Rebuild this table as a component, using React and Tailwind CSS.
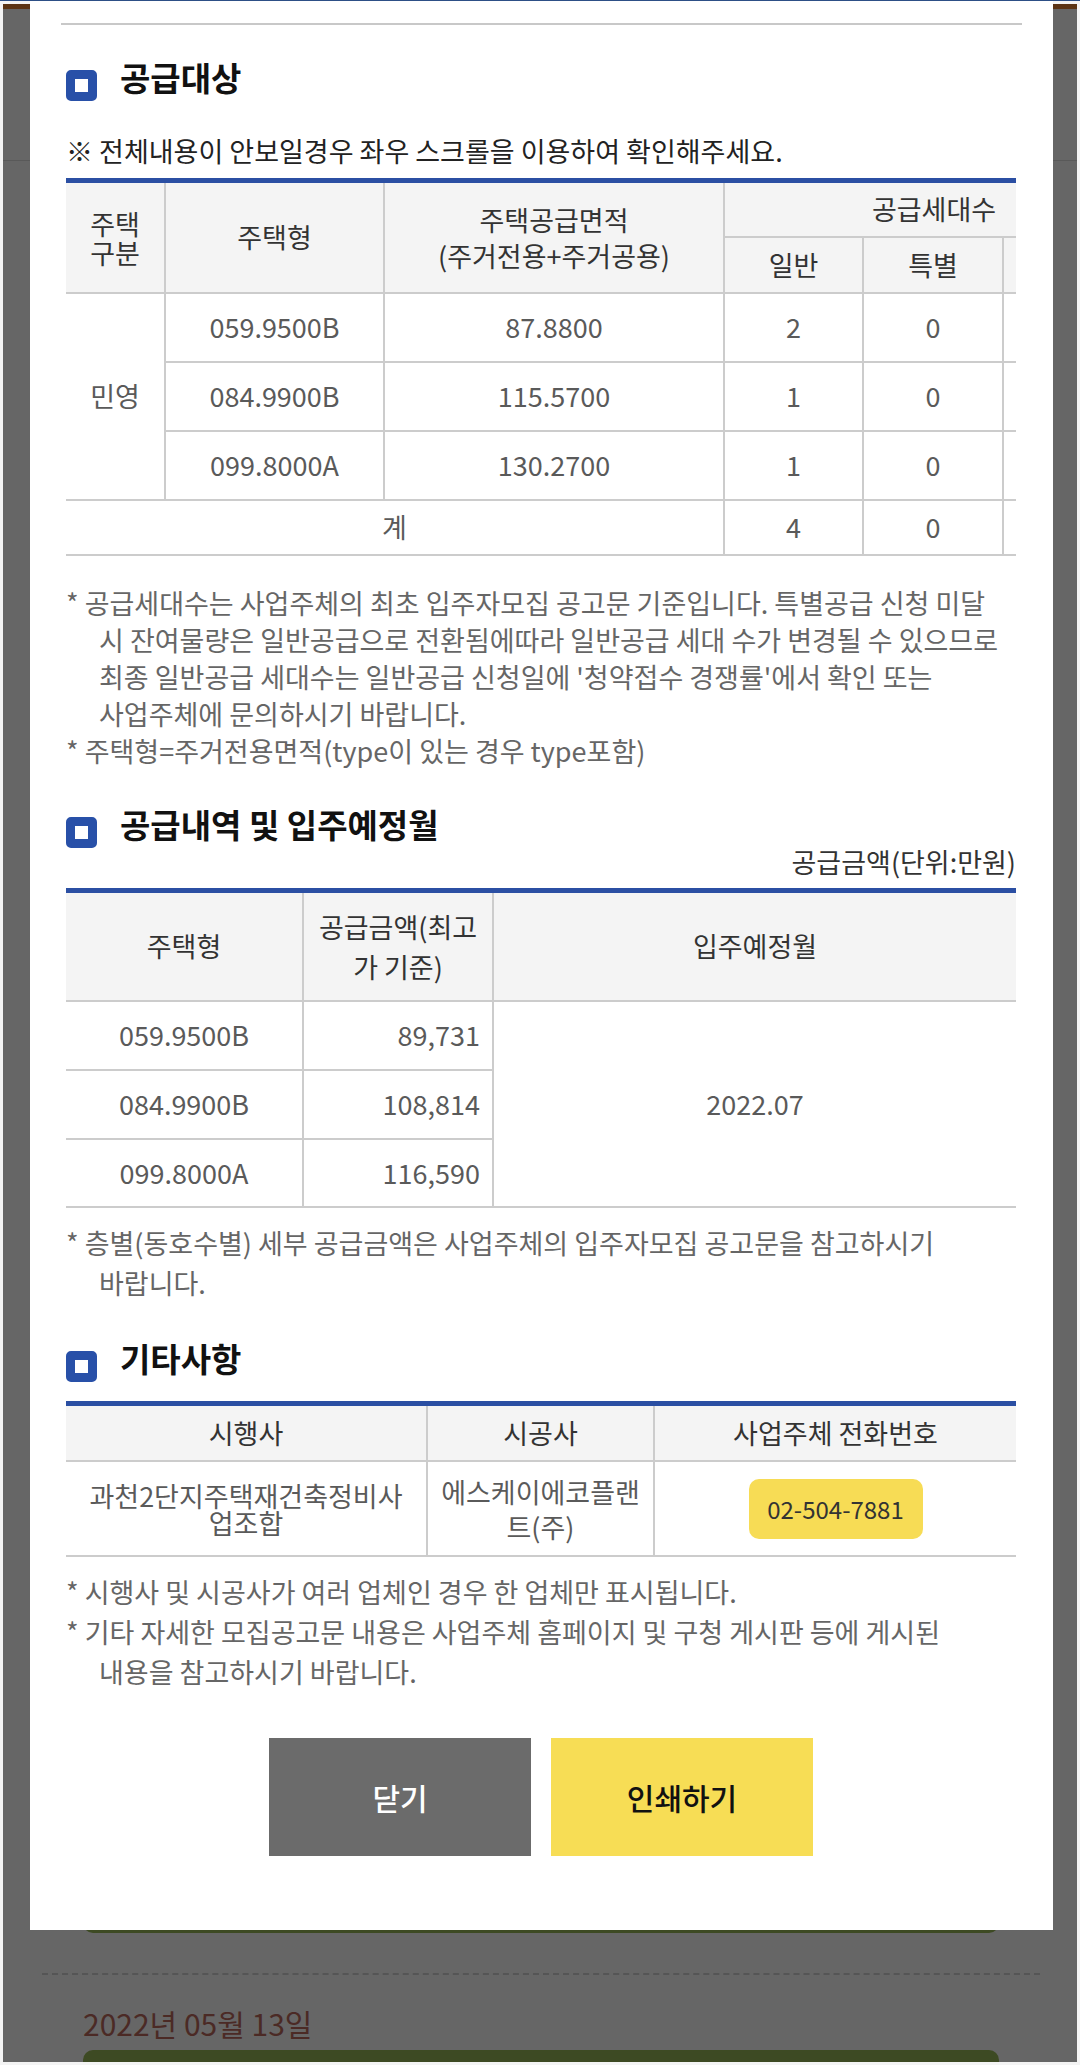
import React from "react";

const FONT = "font-['Noto_Sans_CJK_KR','Noto_Sans',sans-serif]";
const LINE = "border-[#cccccc]";

function SectionTitle({ children, className = "" }) {
  return (
    <div className={`flex items-start gap-[23px] h-[40px] ${className}`}>
      <div className="mt-[13px] h-[31px] w-[31px] shrink-0 rounded-[5px] border-[9px] border-[#2850a8] bg-white" />
      <h2 className="text-[33px] leading-[40px] font-bold text-[#111]">{children}</h2>
    </div>
  );
}

function Note({ children, className = "" }) {
  return (
    <p className={`whitespace-nowrap pl-[33px] indent-[-33px] text-[27px] text-[#666] ${className}`}>
      {children}
    </p>
  );
}

function SupplyTargetTable() {
  return (
    <div className="overflow-hidden border-t-[5px] border-[#2b4fa3]">
      <table className="w-[1077px] table-fixed border-collapse text-center text-[27px]">
        <colgroup>
          <col className="w-[99px]" />
          <col className="w-[219px]" />
          <col className="w-[340px]" />
          <col className="w-[139px]" />
          <col className="w-[140px]" />
          <col className="w-[140px]" />
        </colgroup>
        <thead className="bg-[#f4f4f4] text-[#333]">
          <tr className="h-[54px]">
            <th rowSpan={2} className={`border-b-2 ${LINE} px-[15px] font-normal leading-[29px]`}>주택구분</th>
            <th rowSpan={2} className={`border-b-2 border-l-2 ${LINE} font-normal`}>주택형</th>
            <th rowSpan={2} className={`border-b-2 border-l-2 ${LINE} font-normal leading-[36px]`}>
              주택공급면적<br />(주거전용+주거공용)
            </th>
            <th colSpan={3} className={`border-b-2 border-l-2 ${LINE} font-normal`}>공급세대수</th>
          </tr>
          <tr className="h-[56px]">
            <th className={`border-b-2 border-l-2 ${LINE} font-normal`}>일반</th>
            <th className={`border-b-2 border-l-2 ${LINE} font-normal`}>특별</th>
            <th className={`border-b-2 border-l-2 ${LINE} font-normal`}></th>
          </tr>
        </thead>
        <tbody className="text-[#5a5a5a]">
          {[
            ["059.9500B", "87.8800", "2", "0"],
            ["084.9900B", "115.5700", "1", "0"],
            ["099.8000A", "130.2700", "1", "0"],
          ].map((r, i) => (
            <tr key={r[0]} className="h-[69px]">
              {i === 0 && (
                <td rowSpan={3} className={`border-b-2 ${LINE}`}>민영</td>
              )}
              <td className={`border-b-2 border-l-2 ${LINE}`}>{r[0]}</td>
              <td className={`border-b-2 border-l-2 ${LINE}`}>{r[1]}</td>
              <td className={`border-b-2 border-l-2 ${LINE}`}>{r[2]}</td>
              <td className={`border-b-2 border-l-2 ${LINE}`}>{r[3]}</td>
              <td className={`border-b-2 border-l-2 ${LINE}`}></td>
            </tr>
          ))}
          <tr className="h-[55px]">
            <td colSpan={3} className={`border-b-2 ${LINE}`}>계</td>
            <td className={`border-b-2 border-l-2 ${LINE}`}>4</td>
            <td className={`border-b-2 border-l-2 ${LINE}`}>0</td>
            <td className={`border-b-2 border-l-2 ${LINE}`}></td>
          </tr>
        </tbody>
      </table>
    </div>
  );
}

function PriceTable() {
  const rows = [
    ["059.9500B", "89,731"],
    ["084.9900B", "108,814"],
    ["099.8000A", "116,590"],
  ];
  return (
    <div className="border-t-[5px] border-[#2b4fa3]">
      <table className="w-full table-fixed border-collapse text-center text-[27px]">
        <colgroup>
          <col className="w-[237px]" />
          <col className="w-[190px]" />
          <col />
        </colgroup>
        <thead className="bg-[#f4f4f4] text-[#333]">
          <tr className="h-[108px]">
            <th className={`border-b-2 ${LINE} font-normal`}>주택형</th>
            <th className={`border-b-2 border-l-2 ${LINE} px-[10px] font-normal leading-[40px]`}>공급금액(최고가 기준)</th>
            <th className={`border-b-2 border-l-2 ${LINE} font-normal`}>입주예정월</th>
          </tr>
        </thead>
        <tbody className="text-[#5a5a5a]">
          {rows.map((r, i) => (
            <tr key={r[0]} className={i === 2 ? "h-[68px]" : "h-[69px]"}>
              <td className={`border-b-2 ${LINE}`}>{r[0]}</td>
              <td className={`border-b-2 border-l-2 ${LINE} pr-[12px] text-right`}>{r[1]}</td>
              {i === 0 && (
                <td rowSpan={3} className={`border-b-2 border-l-2 ${LINE}`}>2022.07</td>
              )}
            </tr>
          ))}
        </tbody>
      </table>
    </div>
  );
}

function EtcTable() {
  return (
    <div className="border-t-[5px] border-[#2b4fa3]">
      <table className="w-full table-fixed border-collapse text-center text-[27px]">
        <colgroup>
          <col className="w-[361px]" />
          <col className="w-[227px]" />
          <col />
        </colgroup>
        <thead className="bg-[#f4f4f4] text-[#333]">
          <tr className="h-[55px]">
            <th className={`border-b-2 ${LINE} font-normal`}>시행사</th>
            <th className={`border-b-2 border-l-2 ${LINE} font-normal`}>시공사</th>
            <th className={`border-b-2 border-l-2 ${LINE} font-normal`}>사업주체 전화번호</th>
          </tr>
        </thead>
        <tbody className="text-[#5a5a5a]">
          <tr className="h-[95px]">
            <td className={`border-b-2 ${LINE} px-[16px] leading-[27px]`}>과천2단지주택재건축정비사업조합</td>
            <td className={`border-b-2 border-l-2 ${LINE} px-[8px] leading-[35px]`}>에스케이에코플랜트(주)</td>
            <td className={`border-b-2 border-l-2 ${LINE}`}>
              <span className="mx-auto flex h-[60px] w-[174px] items-center justify-center rounded-[10px] bg-[#f7dc55] text-[24px] text-[#333]">
                02-504-7881
              </span>
            </td>
          </tr>
        </tbody>
      </table>
    </div>
  );
}

export default function App() {
  return (
    <div className={`relative h-[2065px] w-[1080px] overflow-hidden bg-[#f4f4f4] ${FONT}`}>
      <div className="h-px bg-[#2d4f86]" />

      {/* page behind the dim overlay */}
      <div className="mx-[3px] mt-[3px] flex h-[2058px] flex-col bg-[#666666]">
        <div className="h-[5px] bg-[#5c3414]" />
        <div className="h-[152px] border-b border-[#595959]" />
        <div className="ml-[80px] mr-[78px] mt-[1712px] h-[60px] rounded-b-[10px] bg-[#3d4a23]" />
        <div className="ml-[39px] mr-[37px] mt-[40px] border-t-2 border-dashed border-[#555]" />
        <p className="ml-[80px] mt-[28px] text-[30px] leading-[40px] text-[#4b2a25]">2022년 05월 13일</p>
        <div className="ml-[80px] mr-[78px] mt-[7px] h-[12px] rounded-t-[10px] bg-[#3d4a23]" />
      </div>

      {/* modal */}
      <div className="absolute left-[30px] top-px w-[1023px] bg-white pt-[22px] pb-[74px]">
        <div className="mx-[31px] h-[2px] bg-[#c8c8c8]" />

        <div className="pl-[36px] pr-[37px]">
          <SectionTitle className="mt-[32px]">공급대상</SectionTitle>
          <p className="mt-[35px] text-[27px] leading-[37px] text-[#222]">
            ※ 전체내용이 안보일경우 좌우 스크롤을 이용하여 확인해주세요.
          </p>
          <div className="mt-[9px]">
            <SupplyTargetTable />
          </div>

          <Note className="mt-[28px] leading-[37px]">
            * 공급세대수는 사업주체의 최초 입주자모집 공고문 기준입니다. 특별공급 신청 미달<br />
            시 잔여물량은 일반공급으로 전환됨에따라 일반공급 세대 수가 변경될 수 있으므로<br />
            최종 일반공급 세대수는 일반공급 신청일에 '청약접수 경쟁률'에서 확인 또는<br />
            사업주체에 문의하시기 바랍니다.
          </Note>
          <Note className="leading-[37px]">* 주택형=주거전용면적(type이 있는 경우 type포함)</Note>

          <SectionTitle className="mt-[35px]">공급내역 및 입주예정월</SectionTitle>
          <p className="-mt-px text-right text-[27px] leading-[37px] text-[#333]">공급금액(단위:만원)</p>
          <div className="mt-[8px]">
            <PriceTable />
          </div>
          <Note className="mt-[15px] leading-[40px]">
            * 층별(동호수별) 세부 공급금액은 사업주체의 입주자모집 공고문을 참고하시기<br />
            바랍니다.
          </Note>

          <SectionTitle className="mt-[35px]">기타사항</SectionTitle>
          <div className="mt-[23px]">
            <EtcTable />
          </div>
          <Note className="mt-[15px] leading-[40px]">* 시행사 및 시공사가 여러 업체인 경우 한 업체만 표시됩니다.</Note>
          <Note className="leading-[40px]">
            * 기타 자세한 모집공고문 내용은 사업주체 홈페이지 및 구청 게시판 등에 게시된<br />
            내용을 참고하시기 바랍니다.
          </Note>

          <div className="mt-[46px] flex justify-center gap-[20px]">
            <button className="h-[118px] w-[262px] bg-[#6b6b6b] text-[30px] font-medium text-white">닫기</button>
            <button className="h-[118px] w-[262px] bg-[#f7dd55] text-[30px] font-medium text-[#111]">인쇄하기</button>
          </div>
        </div>
      </div>
    </div>
  );
}
